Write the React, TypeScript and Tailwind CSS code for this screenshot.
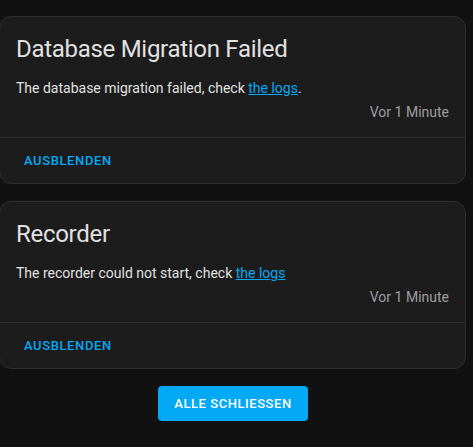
const notifications = [
  {
    id: 1,
    title: "Database Migration Failed",
    text: "The database migration failed, check ",
    suffix: ".",
    time: "Vor 1 Minute",
  },
  {
    id: 2,
    title: "Recorder",
    text: "The recorder could not start, check ",
    suffix: "",
    time: "Vor 1 Minute",
  },
];

const App = () => {
  return (
    <div
      className="w-[473px] h-[447px] bg-[#111111] pt-4 pr-[7px] overflow-hidden"
      style={{ fontFamily: "Roboto, 'Liberation Sans', sans-serif" }}
    >
      <div className="flex flex-col gap-[17px] -ml-px">
        {notifications.map((n) => (
          <div
            key={n.id}
            className="bg-[#1c1c1c] border border-[#2f2f2f] rounded-xl"
          >
            <div className="px-4 pt-4 pb-[15px]">
              <div className="text-[24px] leading-8 tracking-[-0.29px] text-[#e1e1e1]">
                {n.title}
              </div>
              <div className="mt-[13px] text-sm leading-5 text-[#e1e1e1]">
                {n.text}
                <a href="#" className="text-[#03a9f4] underline">
                  the logs
                </a>
                {n.suffix}
              </div>
              <div className="mt-1 text-sm leading-5 text-[#9e9e9e] text-right">
                {n.time}
              </div>
            </div>
            <div className="border-t border-[#2f2f2f] h-[46px] flex items-center px-6">
              <span className="text-[13px] font-medium tracking-[0.6px] uppercase text-[#03a9f4]">
                Ausblenden
              </span>
            </div>
          </div>
        ))}
      </div>
      <div className="flex justify-center mt-[17px]">
        <button className="w-[150px] h-[35px] rounded bg-[#03a9f4] text-white text-[13px] font-medium tracking-[0.55px] uppercase">
          Alle schliessen
        </button>
      </div>
    </div>
  );
};

export default App;
